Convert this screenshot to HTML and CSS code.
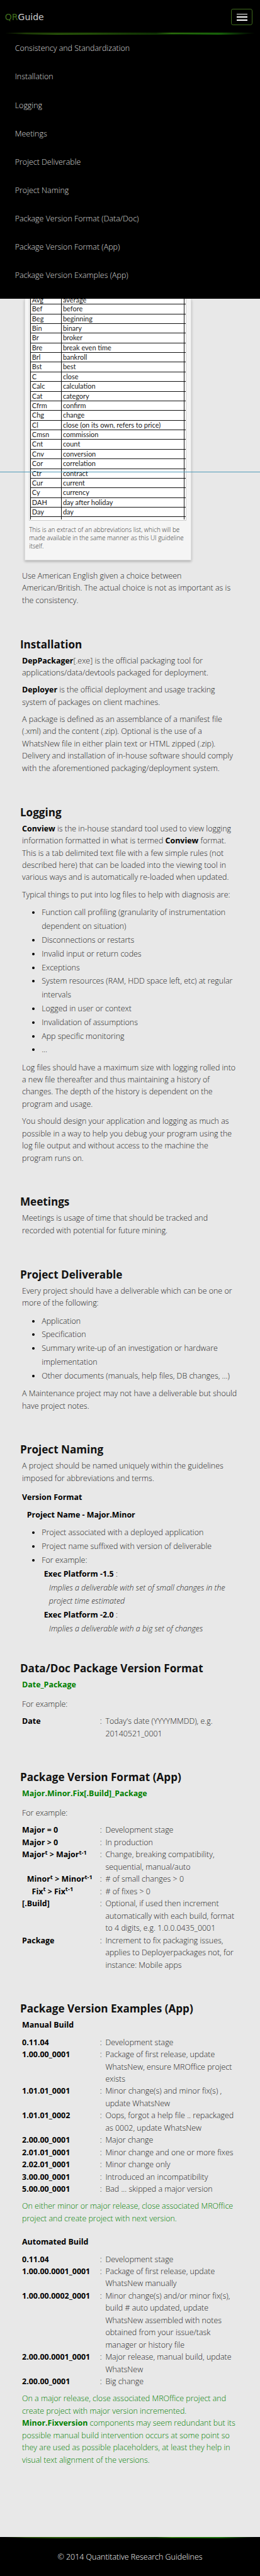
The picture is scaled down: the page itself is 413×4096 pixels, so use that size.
FILE: index.html
```
<!DOCTYPE html>
<html lang="en">
<head>
<meta charset="utf-8">
<title>QRGuide</title>
<link rel="stylesheet" href="styles.css">
</head>
<body>
<header class="navbar">
  <div class="bar">
    <a class="brand"><span class="brand-qr">QR</span>Guide</a>
    <button class="toggle" aria-label="Menu"><i></i><i></i><i></i></button>
  </div>
  <svg class="beam" viewBox="0 0 531 4" preserveAspectRatio="none">
    <defs>
      <linearGradient id="g1"><stop offset="0.02" stop-color="#000"/><stop offset="0.1" stop-color="#2a5208"/><stop offset="0.35" stop-color="#2c6408"/><stop offset="0.6" stop-color="#123e04"/><stop offset="0.66" stop-color="#3c9410"/><stop offset="0.85" stop-color="#1d7d0b"/><stop offset="0.98" stop-color="#000"/></linearGradient>
      <linearGradient id="g2"><stop offset="0.06" stop-color="#000"/><stop offset="0.22" stop-color="#3f8410"/><stop offset="0.5" stop-color="#1f5008"/><stop offset="0.7" stop-color="#0e4a05"/><stop offset="0.84" stop-color="#1f8a0e"/><stop offset="0.95" stop-color="#000"/></linearGradient>
    </defs>
    <rect width="531" height="1.3" fill="url(#g1)"/>
    <rect y="1.3" width="531" height="1.4" fill="url(#g1)" opacity="0.55"/>
    <rect y="2.7" width="531" height="1.3" fill="url(#g2)"/>
  </svg>
  <nav class="menu">
    <a>Consistency and Standardization</a>
    <a>Installation</a>
    <a>Logging</a>
    <a>Meetings</a>
    <a>Project Deliverable</a>
    <a>Project Naming</a>
    <a>Package Version Format (Data/Doc)</a>
    <a>Package Version Format (App)</a>
    <a>Package Version Examples (App)</a>
  </nav>
</header>

<main class="content">
  <figure class="card">
    <div class="sheet">
      <div class="grid">
        <div class="row first"><span>Avg</span><span>average</span></div>
        <div class="row"><span>Bef</span><span>before</span></div>
        <div class="row"><span>Beg</span><span>beginning</span></div>
        <div class="row"><span>Bin</span><span>binary</span></div>
        <div class="row"><span>Br</span><span>broker</span></div>
        <div class="row"><span>Bre</span><span>break even time</span></div>
        <div class="row"><span>Brl</span><span>bankroll</span></div>
        <div class="row"><span>Bst</span><span>best</span></div>
        <div class="row"><span>C</span><span>close</span></div>
        <div class="row"><span>Calc</span><span>calculation</span></div>
        <div class="row"><span>Cat</span><span>category</span></div>
        <div class="row"><span>Cfrm</span><span>confirm</span></div>
        <div class="row"><span>Chg</span><span>change</span></div>
        <div class="row"><span>Cl</span><span>close (on its own, refers to price)</span></div>
        <div class="row"><span>Cmsn</span><span>commission</span></div>
        <div class="row"><span>Cnt</span><span>count</span></div>
        <div class="row"><span>Cnv</span><span>conversion</span></div>
        <div class="row"><span>Cor</span><span>correlation</span></div>
        <div class="row"><span>Ctr</span><span>contract</span></div>
        <div class="row"><span>Cur</span><span>current</span></div>
        <div class="row"><span>Cy</span><span>currency</span></div>
        <div class="row"><span>DAH</span><span>day after holiday</span></div>
        <div class="row"><span>Day</span><span>day</span></div>
        <div class="row last"><span></span><span></span></div>
      </div>
    </div>
    <figcaption>This is an extract of an abbreviations list, which will be<br>made available in the same manner as this UI guideline<br>itself.</figcaption>
  </figure>
  <div class="fold"></div>
  <p>Use American English given a choice between<br>American/British. The actual choice is not as important as is<br>the consistency.</p>

  <h2>Installation</h2>
  <p><b>DepPackager</b>[.exe] is the official packaging tool for<br>applications/data/devtools packaged for deployment.</p>
  <p><b>Deployer</b> is the official deployment and usage tracking<br>system of packages on client machines.</p>
  <p>A package is defined as an assemblance of a manifest file<br>(.xml) and the content (.zip). Optional is the use of a<br>WhatsNew file in either plain text or HTML zipped (.zip).<br>Delivery and installation of in-house software should comply<br>with the aforementioned packaging/deployment system.</p>

  <h2>Logging</h2>
  <p><b>Conview</b> is the in-house standard tool used to view logging<br>information formatted in what is termed <b>Conview</b> format.<br>This is a tab delimited text file with a few simple rules (not<br>described here) that can be loaded into the viewing tool in<br>various ways and is automatically re-loaded when updated.</p>
  <p>Typical things to put into log files to help with diagnosis are:</p>
  <ul>
    <li>Function call profiling (granularity of instrumentation<br>dependent on situation)</li>
    <li>Disconnections or restarts</li>
    <li>Invalid input or return codes</li>
    <li>Exceptions</li>
    <li>System resources (RAM, HDD space left, etc) at regular<br>intervals</li>
    <li>Logged in user or context</li>
    <li>Invalidation of assumptions</li>
    <li>App specific monitoring</li>
    <li>...</li>
  </ul>
  <p>Log files should have a maximum size with logging rolled into<br>a new file thereafter and thus maintaining a history of<br>changes. The depth of the history is dependent on the<br>program and usage.</p>
  <p>You should design your application and logging as much as<br>possible in a way to help you debug your program using the<br>log file output and without access to the machine the<br>program runs on.</p>

  <h2>Meetings</h2>
  <p>Meetings is usage of time that should be tracked and<br>recorded with potential for future mining.</p>

  <h2>Project Deliverable</h2>
  <p>Every project should have a deliverable which can be one or<br>more of the following:</p>
  <ul>
    <li>Application</li>
    <li>Specification</li>
    <li>Summary write-up of an investigation or hardware<br>implementation</li>
    <li>Other documents (manuals, help files, DB changes, ...)</li>
  </ul>
  <p>A Maintenance project may not have a deliverable but should<br>have project notes.</p>

  <h2>Project Naming</h2>
  <p>A project should be named uniquely within the guidelines<br>imposed for abbreviations and terms.</p>
  <p class="spaced"><b>Version Format</b></p>
  <p class="indent"><b>Project Name - Major.Minor</b></p>
  <ul>
    <li>Project associated with a deployed application</li>
    <li>Project name suffixed with version of deliverable</li>
    <li>For example:
      <div class="example"><b>Exec Platform -1.5</b> :</div>
      <div class="implies">Implies a deliverable with set of small changes in the<br>project time estimated</div>
      <div class="example"><b>Exec Platform -2.0</b> :</div>
      <div class="implies">Implies a deliverable with a big set of changes</div>
    </li>
  </ul>

  <h2 class="tight">Data/Doc Package Version Format</h2>
  <p class="green"><b>Date_Package</b></p>
  <p class="spaced">For example:</p>
  <dl>
    <dt>Date</dt><dd>Today's date (YYYYMMDD), e.g.<br>20140521_0001</dd>
  </dl>

  <h2>Package Version Format (App)</h2>
  <p class="green"><b>Major.Minor.Fix[.Build]_Package</b></p>
  <p class="spaced">For example:</p>
  <dl>
    <dt>Major = 0</dt><dd>Development stage</dd>
    <dt>Major &gt; 0</dt><dd>In production</dd>
    <dt>Major<sup>t</sup> &gt; Major<sup>t-1</sup></dt><dd>Change, breaking compatibility,<br>sequential, manual/auto</dd>
    <dt class="in1">Minor<sup>t</sup> &gt; Minor<sup>t-1</sup></dt><dd># of small changes &gt; 0</dd>
    <dt class="in2">Fix<sup>t</sup> &gt; Fix<sup>t-1</sup></dt><dd># of fixes &gt; 0</dd>
    <dt>[.Build]</dt><dd>Optional, if used then increment<br>automatically with each build, format<br>to 4 digits, e.g. 1.0.0.0435_0001</dd>
    <dt>Package</dt><dd>Increment to fix packaging issues,<br>applies to Deployerpackages not, for<br>instance: Mobile apps</dd>
  </dl>

  <h2>Package Version Examples (App)</h2>
  <p><b>Manual Build</b></p>
  <dl>
    <dt>0.11.04</dt><dd>Development stage</dd>
    <dt>1.00.00_0001</dt><dd>Package of first release, update<br>WhatsNew, ensure MROffice project<br>exists</dd>
    <dt>1.01.01_0001</dt><dd>Minor change(s) and minor fix(s) ,<br>update WhatsNew</dd>
    <dt>1.01.01_0002</dt><dd>Oops, forgot a help file .. repackaged<br>as 0002, update WhatsNew</dd>
    <dt>2.00.00_0001</dt><dd>Major change</dd>
    <dt>2.01.01_0001</dt><dd>Minor change and one or more fixes</dd>
    <dt>2.02.01_0001</dt><dd>Minor change only</dd>
    <dt>3.00.00_0001</dt><dd>Introduced an incompatibility</dd>
    <dt>5.00.00_0001</dt><dd>Bad ... skipped a major version</dd>
  </dl>
  <p class="green">On either minor or major release, close associated MROffice<br>project and create project with next version.</p>
  <p class="build"><b>Automated Build</b></p>
  <dl>
    <dt>0.11.04</dt><dd>Development stage</dd>
    <dt>1.00.00.0001_0001</dt><dd>Package of first release, update<br>WhatsNew manually</dd>
    <dt>1.00.00.0002_0001</dt><dd>Minor change(s) and/or minor fix(s),<br>build # auto updated, update<br>WhatsNew assembled with notes<br>obtained from your issue/task<br>manager or history file</dd>
    <dt>2.00.00.0001_0001</dt><dd>Major release, manual build, update<br>WhatsNew</dd>
    <dt>2.00.00_0001</dt><dd>Big change</dd>
  </dl>
  <p class="green">On a major release, close associated MROffice project and<br>create project with major version incremented.<br><b>Minor.Fixversion</b> components may seem redundant but its<br>possible manual build intervention occurs at some point so<br>they are used as possible placeholders, at least they help in<br>visual text alignment of the versions.</p>
</main>

<footer class="footer">
  <svg class="beam" viewBox="0 0 531 4" preserveAspectRatio="none">
    <rect width="531" height="1.6" fill="url(#g1)"/>
    <rect y="1.6" width="531" height="1.2" fill="url(#g2)" opacity="0.7"/>
  </svg>
  <p class="copyright">© 2014 Quantitative Research Guidelines</p>
</footer>
</body>
</html>
```
FILE: styles.css
```
/* 1rem is ten design pixels */
html { font-size: 7.785px; background: #000; }
* { box-sizing: border-box; }
body {
  margin: 0;
  display: flex;
  flex-direction: column;
  min-height: 4096px;
  overflow-x: hidden;
  background: #e8e8e8;
  color: #222;
  font: 300 1.6rem/2.5rem "Open Sans", sans-serif;
  white-space: nowrap;
}

.navbar { height: 61rem; background: #000; flex: none; }
.bar {
  height: 6.7rem;
  padding: 0.3rem 1.5rem 0 1rem;
  display: flex;
  align-items: center;
  justify-content: space-between;
}
.brand { padding-top: 0.2rem; font: 400 1.8rem/2rem "DejaVu Sans", sans-serif; color: #ccc; }
.brand-qr { color: #3f6b1c; }
.toggle {
  width: 4.4rem;
  height: 3.4rem;
  padding: 0;
  display: flex;
  flex-direction: column;
  align-items: center;
  justify-content: center;
  gap: 0.4rem;
  background: #000;
  border: 1px solid #3f6b1c;
  border-radius: 0.4rem;
}
.toggle i { width: 2.2rem; height: 0.2rem; background: #fff; }
.beam { display: block; width: 100%; height: 0.4rem; }
.menu a { display: block; height: 5.8rem; line-height: 5.6rem; padding-left: 3.05rem; color: #ddd; }

.content { padding: 0 4.5rem; flex: none; }
.card {
  width: 34rem;
  height: 53.4rem;
  margin: 0 0 0 0.5rem;
  padding: 0 0.8rem;
  background: #f5f5f5;
  border: 1px solid #ddd;
  border-top: 0;
  box-shadow: 0 0.2rem 0.5rem rgba(0, 0, 0, 0.25);
}
.sheet {
  height: 45.35rem;
  padding: 0 0.1rem 0.1rem 0.1rem;
  background: #fff;
  border: 1px solid #ccc;
  border-top: 0;
}
.grid { width: 31.7rem; border-left: 0.2rem solid #000; }
.row {
  display: flex;
  height: 1.975rem;
  border-bottom: 1px solid #111;
  font: 400 1.41rem/1.85rem Lato, sans-serif;
  color: #222;
}
.row span { width: 25.1rem; padding-left: 0.3rem; border-right: 1px solid #111; }
.row span:first-child { width: 6.25rem; padding-left: 0.25rem; }
.first { height: 1.2rem; line-height: 0.4rem; overflow: hidden; }
.last { height: 0.45rem; border-bottom: 0; }
figcaption { padding-top: 1rem; font-size: 1.28rem; line-height: 1.7rem; color: #333; }
.fold { height: 1px; margin: -18rem -4.5rem calc(18rem - 1px); background: #4e9ab8; position: relative; }

p { margin: 0 0 1rem; }
.fold + p { padding-top: 1.96rem; }
b { font-weight: 700; color: #000; }
h2 {
  margin: 6.2rem 0 0.6rem -0.4rem;
  font-size: 2.2rem;
  line-height: 3rem;
  font-weight: 700;
  color: #111;
}
h2.tight { margin-top: 5.2rem; }
p.spaced { margin-top: 1.45rem; }
p.build { margin-top: 2.3rem; }
p.indent { padding-left: 1rem; }
.green, .green b { color: #008000; }

ul { margin: 1.05rem 0 0.95rem; padding-left: 4rem; line-height: 2.8rem; }
li::marker { color: #000; }
.example { padding-left: 0.45rem; }
.implies { padding-left: 1.5rem; font-style: italic; }

dl { display: grid; grid-template-columns: 15.9rem auto; margin: 0 0 1rem; }
dt { font-weight: 700; color: #000; }
dt.in1 { padding-left: 1rem; }
dt.in2 { padding-left: 2rem; }
dd { margin: 0; padding-left: 1.1rem; text-indent: -1.1rem; }
dd::before { content: ":"; display: inline-block; width: 1.1rem; text-indent: 0; }
sup { font-size: 75%; line-height: 0; vertical-align: baseline; position: relative; top: -0.5em; }

.footer { margin-top: auto; height: 8rem; background: #000; }
.copyright { margin: 0; padding-top: 2.45rem; text-align: center; color: #fff; font-weight: 300; }
```
